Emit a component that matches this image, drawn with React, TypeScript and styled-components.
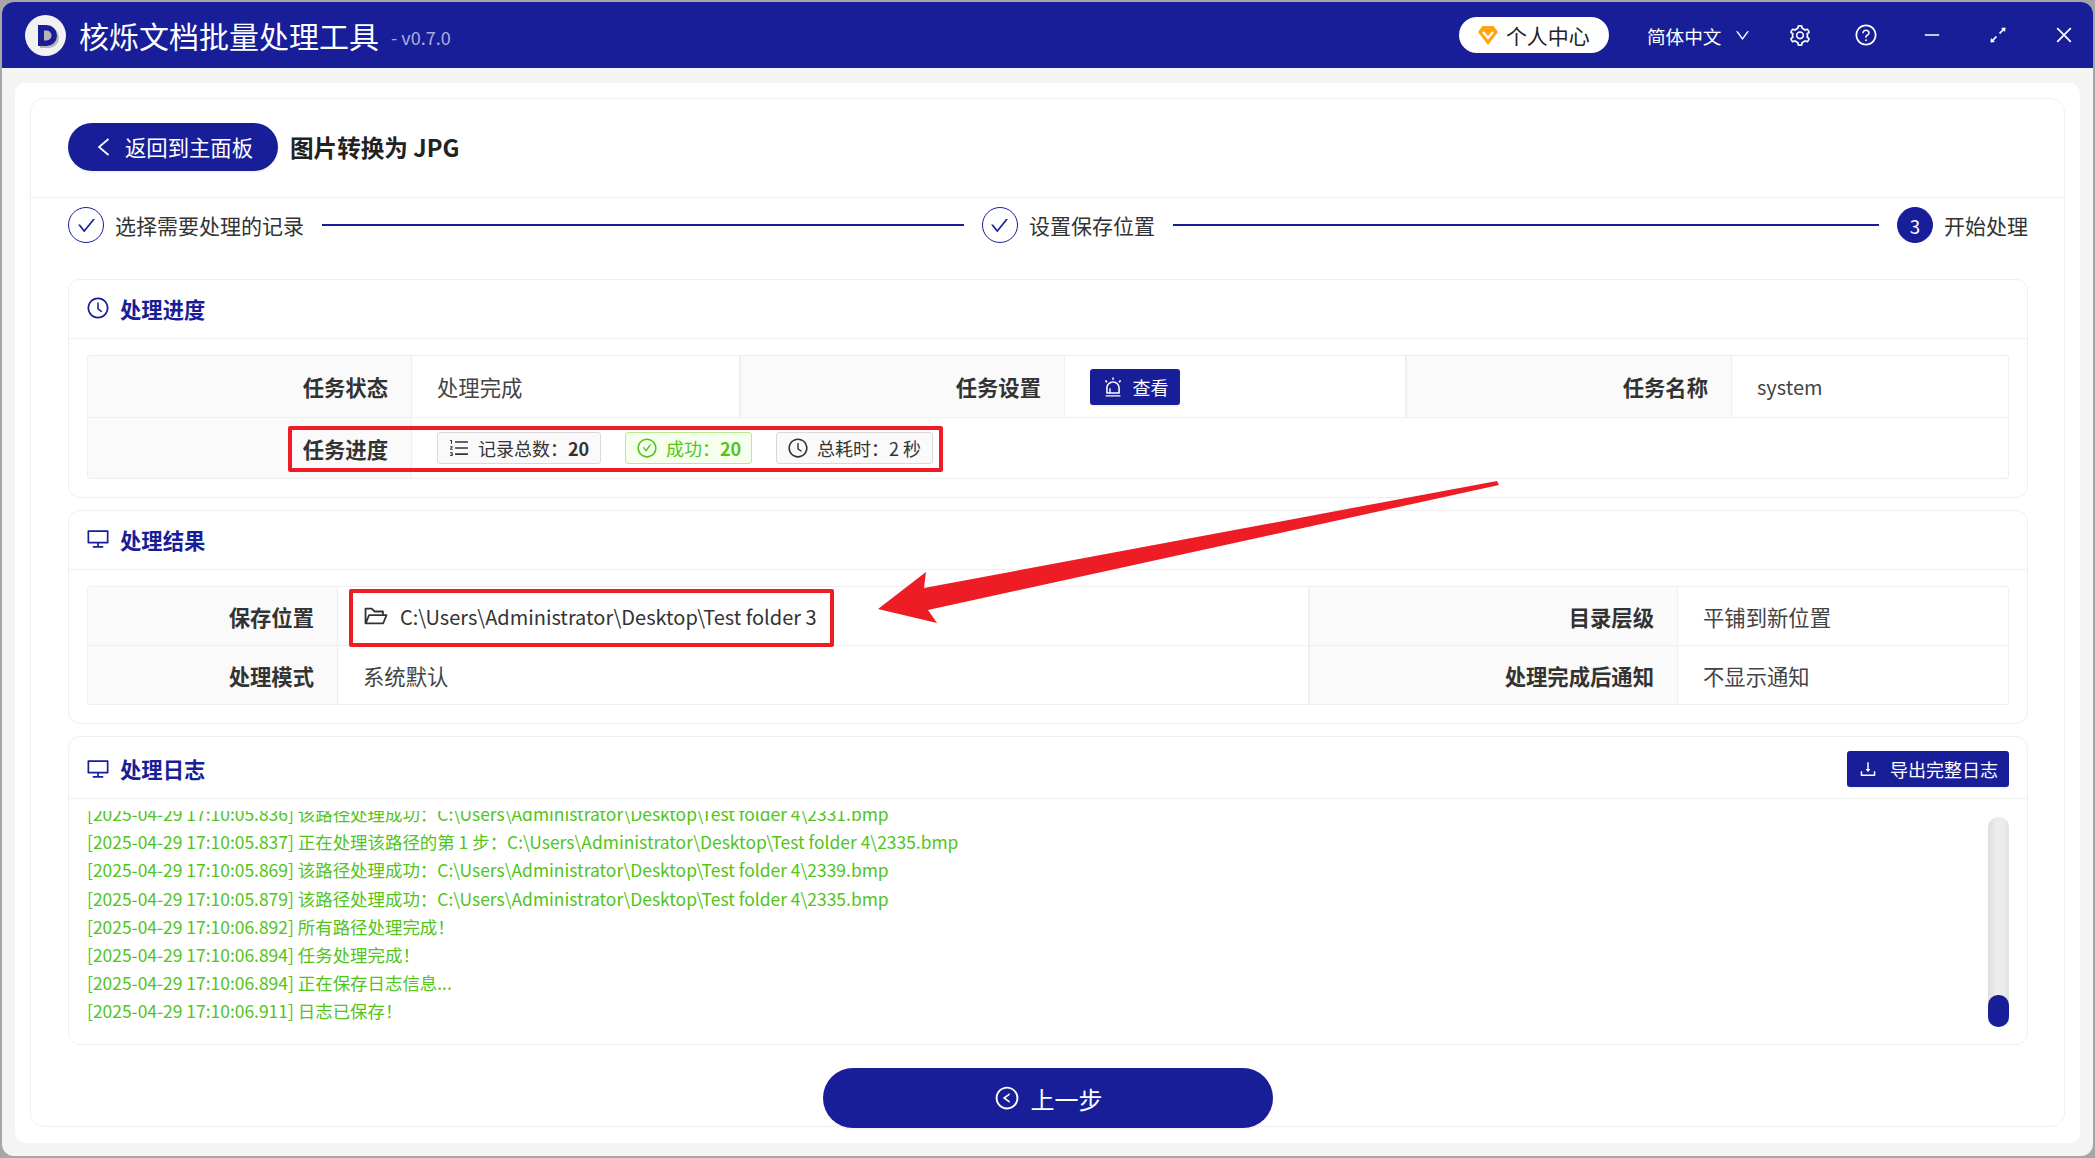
import React from 'react';
import styled, { createGlobalStyle } from 'styled-components';
import {
  AiOutlineAlert,
  AiOutlineArrowsAlt,
  AiOutlineCheck,
  AiOutlineCheckCircle,
  AiOutlineClockCircle,
  AiOutlineClose,
  AiOutlineDesktop,
  AiOutlineDown,
  AiOutlineDownload,
  AiOutlineFolderOpen,
  AiOutlineLeftCircle,
  AiOutlineMinus,
  AiOutlineOrderedList,
  AiOutlineQuestionCircle,
  AiOutlineSetting,
} from 'react-icons/ai';

const NAVY = '#181e98';
const LINE = '#efefef';

const GlobalStyle = createGlobalStyle`
  html, body {
    margin: 0;
    width: 2095px;
    height: 1158px;
    overflow: hidden;
    background: #a6a6a6;
  }
  body {
    font-family: "Noto Sans CJK SC", "Noto Sans", sans-serif;
    color: #333;
  }
  * { box-sizing: border-box; }
`;

const Stage = styled.div`
  position: relative;
  width: 2095px;
  height: 1158px;
  padding: 2px;
`;

const Window = styled.div`
  height: 1154px;
  background: #f4f4f4;
  border-radius: 12px;
  overflow: hidden;
`;

const TitleBar = styled.header`
  height: 66px;
  background: ${NAVY};
  color: #fff;
  display: flex;
  align-items: center;
  padding: 0 17.5px 0 23px;
`;

const AppTitle = styled.div`
  margin-left: 13px;
  font-size: 30px;
  line-height: 40px;
`;

const Version = styled.div`
  margin-left: 12px;
  margin-top: 3px;
  font-size: 18px;
  color: rgba(255, 255, 255, 0.65);
`;

const ProfilePill = styled.div`
  margin-left: auto;
  width: 150px;
  height: 36px;
  border-radius: 18px;
  background: #fff;
  color: #222;
  display: flex;
  align-items: center;
  gap: 8px;
  padding-left: 19px;
  font-size: 21px;
`;

const LangSwitch = styled.div`
  margin-left: 38px;
  display: flex;
  align-items: center;
  gap: 12px;
  font-size: 18.67px;
`;

const WindowTools = styled.div`
  margin-left: 37px;
  display: flex;
  gap: 42px;
`;

const ToolSlot = styled.span`
  width: 24px;
  height: 24px;
  display: flex;
  align-items: center;
  justify-content: center;
`;

const Content = styled.div`
  padding: 15px 13px 13px;
`;

const WhiteCard = styled.main`
  height: 1060px;
  background: #fff;
  border-radius: 10px;
  padding: 15px 15px 16px;
`;

const Panel = styled.div`
  height: 1029px;
  border: 1px solid ${LINE};
  border-radius: 14px;
`;

const PageHead = styled.div`
  height: 99px;
  padding: 0 0 3px 37px;
  border-bottom: 1px solid ${LINE};
  display: flex;
  align-items: center;
  gap: 12px;
`;

const BackButton = styled.button`
  width: 210px;
  height: 48px;
  border: 0;
  border-radius: 24px;
  background: ${NAVY};
  color: #fff;
  box-shadow: 0 2px 0 rgba(0, 0, 0, 0.04);
  display: flex;
  align-items: center;
  gap: 15px;
  padding: 0 0 0 29px;
  font-family: inherit;
  font-size: 21.33px;
`;

const PageTitle = styled.h1`
  margin: 0;
  font-size: 23.6px;
  font-weight: 700;
  color: #222;
`;

const Body = styled.div`
  padding: 9px 36px 0 37px;
`;

const Steps = styled.div`
  display: flex;
  align-items: center;
  gap: 18px;
  height: 36px;
`;

const Step = styled.div`
  display: flex;
  align-items: center;
  gap: 11px;
  font-size: 21px;
  color: #333;
`;

const StepDot = styled.span<{ $active?: boolean }>`
  width: 36px;
  height: 36px;
  border-radius: 50%;
  border: 1.4px solid ${NAVY};
  background: ${(p) => (p.$active ? NAVY : '#fff')};
  color: ${(p) => (p.$active ? '#fff' : NAVY)};
  display: flex;
  align-items: center;
  justify-content: center;
  font-size: 18.67px;
`;

const StepLine = styled.span<{ $grow: number }>`
  flex: ${(p) => p.$grow} 1 0;
  height: 2.5px;
  background: ${NAVY};
`;

const Sections = styled.div`
  margin-top: 36px;
  display: flex;
  flex-direction: column;
  gap: 12px;
`;

const Section = styled.section`
  border: 1px solid ${LINE};
  border-radius: 12px;
`;

const SectionHead = styled.div<{ $height: number; $padding: string }>`
  height: ${(p) => p.$height}px;
  border-bottom: 1px solid ${LINE};
  padding: ${(p) => p.$padding};
  display: flex;
  align-items: center;
  gap: 10px;
  color: ${NAVY};
`;

const SectionTitle = styled.h2`
  margin: 0;
  font-size: 21.33px;
  font-weight: 700;
`;

const ExportButton = styled.button`
  margin-left: auto;
  width: 162px;
  height: 36px;
  border: 0;
  border-radius: 3px;
  background: ${NAVY};
  color: #fff;
  box-shadow: 0 2px 0 rgba(0, 0, 0, 0.04);
  display: flex;
  align-items: center;
  justify-content: center;
  gap: 12px;
  font-family: inherit;
  font-size: 18px;
`;

const SectionBody = styled.div`
  padding: 16px 18px 18px;
`;

const InfoTable = styled.div<{ $columns: string; $rows: string }>`
  border: 1px solid ${LINE};
  border-radius: 3px;
  display: grid;
  grid-template-columns: ${(p) => p.$columns};
  grid-template-rows: ${(p) => p.$rows};
`;

const Label = styled.div<{ $last?: boolean; $divider?: boolean }>`
  background: #fafafa;
  border-bottom: ${(p) => (p.$last ? '0' : `1px solid ${LINE}`)};
  border-left: ${(p) => (p.$divider ? `2px solid ${LINE}` : '0')};
  border-right: 1px solid ${LINE};
  padding-right: 23px;
  display: flex;
  align-items: center;
  justify-content: flex-end;
  font-size: 21.33px;
  font-weight: 700;
  color: #333;
`;

const Value = styled.div<{ $last?: boolean; $span?: number }>`
  grid-column: span ${(p) => p.$span ?? 1};
  border-bottom: ${(p) => (p.$last ? '0' : `1px solid ${LINE}`)};
  padding-left: 25px;
  display: flex;
  align-items: center;
  font-size: 21.33px;
  color: #444;
`;

const LatinText = styled.span`
  font-size: 20px;
`;

const ViewButton = styled.button`
  width: 90px;
  height: 36px;
  border: 0;
  border-radius: 3px;
  background: ${NAVY};
  color: #fff;
  box-shadow: 0 2px 0 rgba(0, 0, 0, 0.04);
  display: flex;
  align-items: center;
  justify-content: center;
  gap: 9px;
  font-family: inherit;
  font-size: 18px;
`;

const Tags = styled.div`
  display: flex;
  gap: 24px;
`;

const Tag = styled.span<{ $success?: boolean; $width: number }>`
  width: ${(p) => p.$width}px;
  height: 32px;
  padding-left: 10px;
  border: 1px solid ${(p) => (p.$success ? '#b7eb8f' : '#d9d9d9')};
  background: ${(p) => (p.$success ? '#f6ffed' : '#fafafa')};
  color: ${(p) => (p.$success ? '#52c41a' : '#333')};
  border-radius: 3px;
  display: flex;
  align-items: center;
  gap: 8px;
  font-size: 18px;
`;

const TagCount = styled.b`
  font-weight: 700;
`;

const PathRow = styled.span`
  display: flex;
  align-items: center;
  gap: 11px;
  color: #333;
`;

const LogBody = styled.div`
  padding: 12px 18px 0;
  display: flex;
  height: 245px;
`;

const LogWindow = styled.div`
  flex: 1;
  height: 225px;
  overflow: hidden;
`;

const LogList = styled.div`
  margin-top: -11px;
  font-size: 17.45px;
  line-height: 28.2px;
  color: #52c41a;
  white-space: pre;
`;

const ScrollTrack = styled.div`
  margin-top: 6px;
  width: 21px;
  height: 210px;
  border-radius: 10px;
  background: linear-gradient(90deg, #dedede, #ececec 40%, #ececec 70%, #e2e2e2);
  display: flex;
  flex-direction: column;
  justify-content: flex-end;
`;

const ScrollThumb = styled.div`
  height: 32px;
  border-radius: 10px;
  background: ${NAVY};
`;

const Footer = styled.div`
  margin-top: 23px;
  display: flex;
  justify-content: center;
`;

const PrevButton = styled.button`
  width: 450px;
  height: 60px;
  border: 0;
  border-radius: 30px;
  background: ${NAVY};
  color: #fff;
  box-shadow: 0 2px 0 rgba(0, 0, 0, 0.04);
  display: flex;
  align-items: center;
  justify-content: center;
  gap: 11px;
  font-family: inherit;
  font-size: 24px;
`;

const Highlight = styled.div`
  position: absolute;
  border: 4px solid #ee1c25;
  border-radius: 2px;
  pointer-events: none;
`;

const ProgressHighlight = styled(Highlight)`
  left: 288px;
  top: 426px;
  width: 655px;
  height: 46px;
`;

const PathHighlight = styled(Highlight)`
  left: 349px;
  top: 589px;
  width: 485px;
  height: 58px;
`;

const ArrowOverlay = styled.svg`
  position: absolute;
  left: 0;
  top: 0;
  pointer-events: none;
`;

const Logo = () => (
  <svg width="41" height="41" viewBox="0 0 41 41">
    <circle cx="20.5" cy="20.5" r="20.5" fill="#f2f2f2" />
    <path d="M15 12h8.5a10.5 10.5 0 0 1 0 21H15z" fill="#b5b5b5" />
    <path
      fillRule="evenodd"
      d="M13 10h8.5a10.5 10.5 0 0 1 0 21H13zM19 15.5v10h2.5a5 5 0 0 0 0-10z"
      fill={NAVY}
    />
  </svg>
);

const Diamond = () => (
  <svg width="20" height="19" viewBox="0 0 20 19">
    <path d="M4.5 0h11L20 6 10 19 0 6z" fill="#ffa50f" />
    <path d="M5 6l5 6 5-6" fill="none" stroke="#fff" strokeWidth="2.4" />
  </svg>
);

const BackChevron = () => (
  <svg width="13" height="18" viewBox="0 0 13 18">
    <path d="M11.5 1L2 9l9.5 8" fill="none" stroke="#fff" strokeWidth="1.7" />
  </svg>
);

const LOG_LINES = [
  '[2025-04-29 17:10:05.836] 该路径处理成功：C:\\Users\\Administrator\\Desktop\\Test folder 4\\2331.bmp',
  '[2025-04-29 17:10:05.837] 正在处理该路径的第 1 步：C:\\Users\\Administrator\\Desktop\\Test folder 4\\2335.bmp',
  '[2025-04-29 17:10:05.869] 该路径处理成功：C:\\Users\\Administrator\\Desktop\\Test folder 4\\2339.bmp',
  '[2025-04-29 17:10:05.879] 该路径处理成功：C:\\Users\\Administrator\\Desktop\\Test folder 4\\2335.bmp',
  '[2025-04-29 17:10:06.892] 所有路径处理完成！',
  '[2025-04-29 17:10:06.894] 任务处理完成！',
  '[2025-04-29 17:10:06.894] 正在保存日志信息...',
  '[2025-04-29 17:10:06.911] 日志已保存！',
];

export default function App() {
  return (
    <Stage>
      <GlobalStyle />
      <Window>
        <TitleBar>
          <Logo />
          <AppTitle>核烁文档批量处理工具</AppTitle>
          <Version>- v0.7.0</Version>
          <ProfilePill>
            <Diamond />
            个人中心
          </ProfilePill>
          <LangSwitch>
            简体中文
            <AiOutlineDown size={17} />
          </LangSwitch>
          <WindowTools>
            <ToolSlot><AiOutlineSetting size={25} /></ToolSlot>
            <ToolSlot><AiOutlineQuestionCircle size={24} /></ToolSlot>
            <ToolSlot><AiOutlineMinus size={20} /></ToolSlot>
            <ToolSlot><AiOutlineArrowsAlt size={22} /></ToolSlot>
            <ToolSlot><AiOutlineClose size={22} /></ToolSlot>
          </WindowTools>
        </TitleBar>
        <Content>
          <WhiteCard>
            <Panel>
              <PageHead>
                <BackButton>
                  <BackChevron />
                  返回到主面板
                </BackButton>
                <PageTitle>图片转换为 JPG</PageTitle>
              </PageHead>
              <Body>
                <Steps>
                  <Step>
                    <StepDot><AiOutlineCheck size={21} /></StepDot>
                    选择需要处理的记录
                  </Step>
                  <StepLine $grow={641} />
                  <Step>
                    <StepDot><AiOutlineCheck size={21} /></StepDot>
                    设置保存位置
                  </Step>
                  <StepLine $grow={705} />
                  <Step>
                    <StepDot $active>3</StepDot>
                    开始处理
                  </Step>
                </Steps>
                <Sections>
                  <Section>
                    <SectionHead $height={59} $padding="0 18px 2px 17px">
                      <AiOutlineClockCircle size={24} />
                      <SectionTitle>处理进度</SectionTitle>
                    </SectionHead>
                    <SectionBody>
                      <InfoTable $columns="324px 327px 326px 340px 327px 1fr" $rows="62px 60px">
                        <Label>任务状态</Label>
                        <Value>处理完成</Value>
                        <Label $divider>任务设置</Label>
                        <Value>
                          <ViewButton>
                            <AiOutlineAlert size={22} />
                            查看
                          </ViewButton>
                        </Value>
                        <Label $divider>任务名称</Label>
                        <Value><LatinText>system</LatinText></Value>
                        <Label $last>任务进度</Label>
                        <Value $last $span={5}>
                          <Tags>
                            <Tag $width={164}>
                              <AiOutlineOrderedList size={22} />
                              <span>记录总数：<TagCount>20</TagCount></span>
                            </Tag>
                            <Tag $success $width={127}>
                              <AiOutlineCheckCircle size={22} />
                              <span>成功：<TagCount>20</TagCount></span>
                            </Tag>
                            <Tag $width={157}>
                              <AiOutlineClockCircle size={22} />
                              <span>总耗时：2 秒</span>
                            </Tag>
                          </Tags>
                        </Value>
                      </InfoTable>
                    </SectionBody>
                  </Section>
                  <Section>
                    <SectionHead $height={59} $padding="0 18px 2px 17px">
                      <AiOutlineDesktop size={24} />
                      <SectionTitle>处理结果</SectionTitle>
                    </SectionHead>
                    <SectionBody>
                      <InfoTable $columns="250px 970px 370px 1fr" $rows="59px 58px">
                        <Label>保存位置</Label>
                        <Value>
                          <PathRow>
                            <AiOutlineFolderOpen size={26} />
                            <LatinText>C:\Users\Administrator\Desktop\Test folder 3</LatinText>
                          </PathRow>
                        </Value>
                        <Label $divider>目录层级</Label>
                        <Value>平铺到新位置</Value>
                        <Label $last>处理模式</Label>
                        <Value $last>系统默认</Value>
                        <Label $last $divider>处理完成后通知</Label>
                        <Value $last>不显示通知</Value>
                      </InfoTable>
                    </SectionBody>
                  </Section>
                  <Section>
                    <SectionHead $height={62} $padding="2px 18px 0 17px">
                      <AiOutlineDesktop size={24} />
                      <SectionTitle>处理日志</SectionTitle>
                      <ExportButton>
                        <AiOutlineDownload size={20} />
                        导出完整日志
                      </ExportButton>
                    </SectionHead>
                    <LogBody>
                      <LogWindow>
                        <LogList>
                          {LOG_LINES.map((line) => (
                            <div key={line}>{line}</div>
                          ))}
                        </LogList>
                      </LogWindow>
                      <ScrollTrack>
                        <ScrollThumb />
                      </ScrollTrack>
                    </LogBody>
                  </Section>
                </Sections>
                <Footer>
                  <PrevButton>
                    <AiOutlineLeftCircle size={26} />
                    上一步
                  </PrevButton>
                </Footer>
              </Body>
            </Panel>
          </WhiteCard>
        </Content>
      </Window>
      <ProgressHighlight />
      <PathHighlight />
      <ArrowOverlay width="2095" height="1158" viewBox="0 0 2095 1158">
        <polygon points="878,609 926,572 924,588 1497,481 1499,485 928,610 937,623" fill="#ee1c25" />
      </ArrowOverlay>
    </Stage>
  );
}
